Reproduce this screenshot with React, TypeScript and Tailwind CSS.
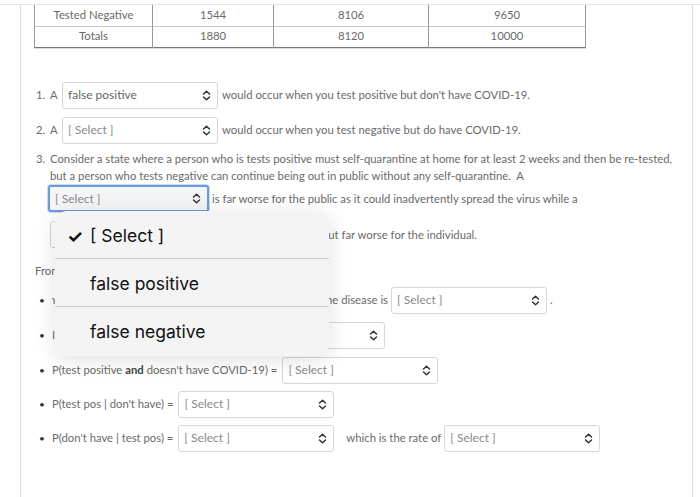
import React from "react";

const Chevrons = () => (
  <svg width="9" height="11" viewBox="0 0 9 11" fill="none" className="shrink-0">
    <path d="M1.5 4 L4.5 1.2 L7.5 4" stroke="#333" strokeWidth="1.5" strokeLinecap="round" strokeLinejoin="round" />
    <path d="M1.5 7 L4.5 9.8 L7.5 7" stroke="#333" strokeWidth="1.5" strokeLinecap="round" strokeLinejoin="round" />
  </svg>
);

// canvas-style dropdown
const Select = ({ value = "[ Select ]", width = "w-[156px]", focused = false }: { value?: string; width?: string; focused?: boolean }) => (
  <div
    className={`${width} h-[27px] shrink-0 flex items-center justify-between pl-[5px] pr-[6px] rounded-[3px] ${
      focused ? "border-2 border-[#6b9bd9] bg-[#f4f5f7] shadow-[0_0_0_1px_#c9dbf1]" : "border border-[#d6d6d6] bg-white"
    }`}
  >
    <span className={value === "[ Select ]" ? "text-[#8a8a8a] text-[12px]" : "text-[#666] text-[12px]"}>{value}</span>
    <Chevrons />
  </div>
);

const rows = [
  { label: "Tested Negative", a: "1544", b: "8106", c: "9650" },
  { label: "Totals", a: "1880", b: "8120", c: "10000" },
];

const Bullet = () => <span className="w-[18px] shrink-0 pl-[5px] text-[10px] text-[#333]">•</span>;

export default function App() {
  return (
    <div className="w-[700px] h-[497px] overflow-hidden relative bg-white font-['Lato','Liberation_Sans',sans-serif] text-[11.3px] text-[#6a6a6a]">
      <div className="h-[5px] border-b border-[#e4e4e4]" />
      <div className="ml-[20px] w-[673px] h-[492px] border-x border-[#dadada] pl-[13px]">
        <table className="border-collapse w-[552px] text-center text-[11.3px] text-[#6a6a6a] border-b border-[#777] shadow-[0_1px_0_#ddd]">
          <tbody>
            {rows.map((r) => (
              <tr key={r.label} className="h-[21px] border-t border-[#c8c8c8] first:border-t-0">
                <td className="w-[118px] border-x border-[#999]">{r.label}</td>
                <td className="w-[121px] border-r border-[#999]">{r.a}</td>
                <td className="w-[155px] border-r border-[#999]">{r.b}</td>
                <td className="border-r border-[#999]">{r.c}</td>
              </tr>
            ))}
          </tbody>
        </table>

        <div className="mt-[34px] h-[27px] flex items-center">
          <span className="w-[16px] pl-[2px]">1.</span>
          <span className="w-[12px]">A</span>
          <Select value="false positive" />
          <span className="ml-[4px]">would occur when you test positive but don't have COVID-19.</span>
        </div>
        <div className="mt-[8px] h-[27px] flex items-center">
          <span className="w-[16px] pl-[2px]">2.</span>
          <span className="w-[12px]">A</span>
          <Select />
          <span className="ml-[4px]">would occur when you test negative but do have COVID-19.</span>
        </div>
        <div className="mt-[6px] flex">
          <span className="w-[16px] pl-[2px] shrink-0 leading-[17px]">3.</span>
          <div className="leading-[17px]">
            <p className="whitespace-nowrap">
              Consider a state where a person who is tests positive must self-quarantine at home for at least 2 weeks and then be re-tested,
            </p>
            <p>but a person who tests negative can continue being out in public without any self-quarantine.&nbsp; A</p>
            <div className="mt-[1px] h-[27px] flex items-center -ml-[2px]">
              <Select focused width="w-[161px]" />
              <span className="ml-[3px]">is far worse for the public as it could inadvertently spread the virus while a</span>
            </div>
            <div className="mt-[9px] h-[27px] flex items-center">
              <Select />
              <span className="ml-[4px]">is better for the public but far worse for the individual.</span>
            </div>
          </div>
        </div>

        <p className="mt-[14px] leading-[17px] pl-[1px]">From the table above, answer the following.</p>

        <div className="mt-[8px] h-[27px] flex items-center">
          <Bullet />
          <span className="w-[336px] flex justify-end overflow-hidden whitespace-nowrap">
            The probability that a randomly chosen person in the study actually has the disease is
          </span>
          <span className="ml-[3px]"><Select /></span>
          <span className="ml-[3px]">.</span>
        </div>
        <div className="mt-[8px] h-[27px] flex items-center">
          <Bullet />
          <span className="w-[174px] overflow-hidden whitespace-nowrap">If positive, chance of having it =</span>
          <span className="ml-[3px]"><Select /></span>
        </div>
        <div className="mt-[8px] h-[27px] flex items-center">
          <Bullet />
          <span>
            P(test positive <b className="font-bold text-[#444]">and</b> doesn't have COVID-19) =
          </span>
          <span className="ml-[5px]"><Select /></span>
        </div>
        <div className="mt-[7px] h-[27px] flex items-center">
          <Bullet />
          <span>P(test pos | don't have) =</span>
          <span className="ml-[5px]"><Select /></span>
        </div>
        <div className="mt-[7px] h-[27px] flex items-center">
          <Bullet />
          <span>P(don't have | test pos) =</span>
          <span className="ml-[5px]"><Select /></span>
          <span className="ml-[12px]">which is the rate of</span>
          <span className="ml-[3px]"><Select /></span>
        </div>
      </div>

      {/* native picker popover */}
      <div className="absolute left-[55px] top-[211px] w-[274px] rounded-[12px] bg-[#f4f4f4] shadow-[0_4px_22px_rgba(0,0,0,0.12)] font-['Inter','Noto_Sans',sans-serif] text-[17.5px] text-[#111] overflow-hidden">
        <div className="h-[48px] pt-[3px] flex items-center border-b border-[#d0d0d0]">
          <span className="w-[35px] pl-[12px] text-[18px] font-bold">✓</span>
          <span>[ Select ]</span>
        </div>
        <div className="h-[48px] pt-[3px] flex items-center pl-[35px] border-b border-[#d0d0d0]">false positive</div>
        <div className="h-[49px] pt-[1px] flex items-center pl-[35px]">false negative</div>
      </div>
    </div>
  );
}
